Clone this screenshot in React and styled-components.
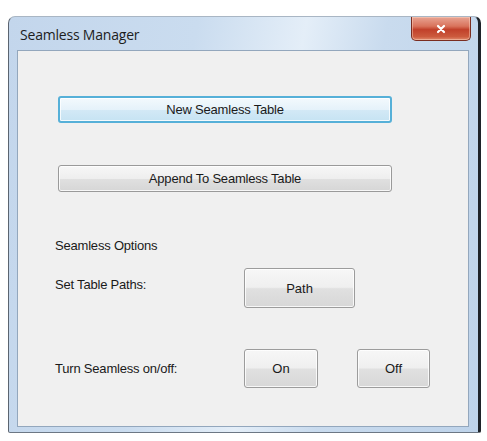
import React from 'react'
import styled, { createGlobalStyle } from 'styled-components'

const Global = createGlobalStyle`
  html, body {
    margin: 0;
    padding: 0;
    background: #ffffff;
  }
  body {
    font-family: 'Liberation Sans', Arial, sans-serif;
  }
`

const Page = () => (
  <Screen>
    <Window>
      <TitleBar>
        <Title>Seamless Manager</Title>
        <CloseButton aria-label="Close">
          <svg width="12" height="10" viewBox="0 0 12 10">
            <path d="M3 2 L9 8 M9 2 L3 8" stroke="#ffffff" strokeWidth="2.2" strokeLinecap="round" />
          </svg>
        </CloseButton>
      </TitleBar>
      <Client>
        <WideButtons>
          <WideButton focused>New Seamless Table</WideButton>
          <WideButton>Append To Seamless Table</WideButton>
        </WideButtons>
        <SectionLabel>Seamless Options</SectionLabel>
        <OptionRow>
          <Label raised>Set Table Paths:</Label>
          <SmallButton w={111} h={40}>Path</SmallButton>
        </OptionRow>
        <OptionRow wide>
          <Label>Turn Seamless on/off:</Label>
          <ButtonPair>
            <SmallButton w={74} h={39}>On</SmallButton>
            <SmallButton w={73} h={39}>Off</SmallButton>
          </ButtonPair>
        </OptionRow>
      </Client>
    </Window>
  </Screen>
)

export default function App() {
  return (
    <>
      <Global />
      <Page />
    </>
  )
}

const Screen = styled.div`
  width: 487px;
  height: 441px;
  padding: 16px 0 0 8px;
  box-sizing: border-box;
`

const Window = styled.div`
  width: 473px;
  height: 417px;
  box-sizing: border-box;
  display: flex;
  flex-direction: column;
  padding: 0 9px 5px 8px;
  border-radius: 7px 7px 2px 2px;
  border-left: 1.5px solid #5b6470;
  border-top: 1px solid #a9b6c4;
  border-right: 3px solid #1e2329;
  border-bottom: 1px solid #6c7784;
  background: linear-gradient(100deg, #c3d6ec 0%, #cadcef 35%, #e4eef8 55%, #c9dbee 70%, #bed3ea 100%);
`

const TitleBar = styled.div`
  height: 33px;
  display: flex;
  align-items: flex-start;
  justify-content: space-between;
`

const Title = styled.div`
  margin: 8px 0 0 3px;
  font-family: 'Open Sans', 'Liberation Sans', sans-serif;
  font-size: 14px;
  letter-spacing: -0.2px;
  color: #1d1d1d;
`

const CloseButton = styled.div`
  width: 58px;
  height: 23px;
  margin-right: -2px;
  display: flex;
  align-items: center;
  justify-content: center;
  border: 1px solid #7a2d20;
  border-top: none;
  border-radius: 0 0 5px 5px;
  background: linear-gradient(180deg, #e8a493 0%, #d9735c 40%, #c1402a 55%, #cc5a3d 85%, #e08a6d 100%);
  box-shadow: inset 0 0 0 1px rgba(255, 220, 200, 0.45);
`

const Client = styled.div`
  flex: 1;
  background: #f0f0f0;
  border: 1px solid #93a7bd;
  padding: 45px 0 0 40px;
  display: flex;
  flex-direction: column;
  font-size: 13px;
  color: #1a1a1a;
`

const WideButtons = styled.div`
  display: flex;
  flex-direction: column;
  gap: 42px;
`

const WideButton = styled.div`
  width: 334px;
  height: 27px;
  box-sizing: border-box;
  display: flex;
  align-items: center;
  justify-content: center;
  border-radius: 3px;
  font-size: 13px;
  letter-spacing: -0.2px;
  border: ${({ focused }) => (focused ? '2px solid #56b0d8' : '1px solid #9a9a9a')};
  background: ${({ focused }) =>
    focused
      ? 'linear-gradient(180deg, #f3f9fd 0%, #e5f2fa 50%, #d3e9f6 52%, #c6e3f3 100%)'
      : 'linear-gradient(180deg, #f7f7f7 0%, #eeeeee 50%, #e0e0e0 52%, #d6d6d6 100%)'};
  box-shadow: inset 0 0 0 1px rgba(255, 255, 255, 0.8);
`

const SectionLabel = styled.div`
  margin: 46px 0 0 -3px;
  line-height: 15px;
  letter-spacing: -0.2px;
`

const OptionRow = styled.div`
  display: flex;
  align-items: center;
  margin-top: ${({ wide }) => (wide ? 41 : 15)}px;
`

const Label = styled.div`
  width: 189px;
  margin-left: -3px;
  margin-bottom: ${({ raised }) => (raised ? 8 : 0)}px;
  letter-spacing: -0.2px;
`

const ButtonPair = styled.div`
  display: flex;
  gap: 39px;
`

const SmallButton = styled.div`
  width: ${({ w }) => w}px;
  height: ${({ h }) => h}px;
  box-sizing: border-box;
  display: flex;
  align-items: center;
  justify-content: center;
  border: 1px solid #9c9c9c;
  border-radius: 3px;
  font-size: 13px;
  background: linear-gradient(180deg, #f7f7f7 0%, #efefef 48%, #e0e0e0 52%, #d7d7d7 100%);
  box-shadow: inset 0 0 0 1px rgba(255, 255, 255, 0.8);
`
